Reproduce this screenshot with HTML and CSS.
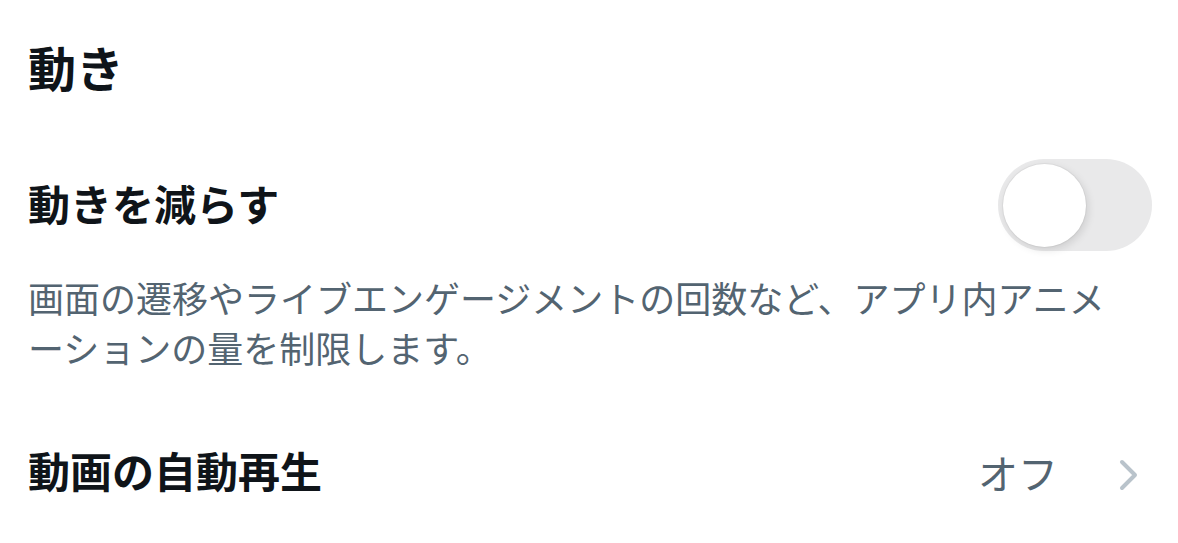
FILE: index.html
```html
<!DOCTYPE html>
<html lang="ja">
<head>
    <meta charset="UTF-8">
    <meta name="viewport" content="width=device-width, initial-scale=1.0">
    <title>動き</title>
    <link rel="stylesheet" href="styles.css">
</head>
<body>
    <div class="settings">
        <h1 class="section-title">動き</h1>

        <div class="setting-row toggle-row">
            <span class="setting-label">動きを減らす</span>
            <label class="switch">
                <input type="checkbox">
                <span class="track"><span class="knob"></span></span>
            </label>
        </div>
        <p class="setting-desc">画面の遷移やライブエンゲージメントの回数など、アプリ内アニメーションの量を制限します。</p>

        <div class="setting-row link-row">
            <span class="setting-label">動画の自動再生</span>
            <span class="setting-value">
                オフ
                <svg class="chevron" width="22" height="34" viewBox="0 0 22 34">
                    <polyline points="4,4 17,17 4,30" fill="none" stroke="#b9c3cb" stroke-width="4" stroke-linecap="round" stroke-linejoin="round"/>
                </svg>
            </span>
        </div>
    </div>
</body>
</html>
```

FILE: styles.css
```css
body {
    margin: 0;
    background-color: #fff;
    font-family: "Noto Sans CJK JP", "Noto Sans", sans-serif;
    color: #0f1419;
}
.settings {
    padding: 0 26px 0 28px;
}
.section-title {
    margin: 0;
    height: 132px;
    padding-bottom: 6px;
    display: flex;
    align-items: center;
    font-size: 48px;
    font-weight: 700;
    line-height: 1;
}
.setting-row {
    display: flex;
    align-items: center;
    justify-content: space-between;
}
.toggle-row {
    height: 134px;
}
.link-row {
    height: 100px;
}
.setting-label {
    font-size: 42px;
    font-weight: 600;
    line-height: 1;
    margin-top: -4px;
}
.setting-desc {
    margin: 0 0 50px;
    width: 1100px;
    font-size: 36px;
    line-height: 50px;
    color: #536471;
    line-break: loose;
}
.setting-value {
    display: flex;
    align-items: center;
    gap: 60px;
    padding-right: 12px;
    font-size: 40px;
    line-height: 1;
    color: #536471;
}
.chevron {
    margin-top: 6px;
}

/* off-state switch */
.switch input {
    display: none;
}
.track {
    display: flex;
    align-items: center;
    width: 154px;
    height: 92px;
    padding: 0 5px;
    box-sizing: border-box;
    border-radius: 46px;
    background-color: #e9e9ea;
}
.knob {
    width: 83px;
    height: 83px;
    border-radius: 50%;
    background-color: #fff;
    box-shadow: 0 0 0 1px rgba(0,0,0,0.04), 2px 3px 8px rgba(0,0,0,0.12);
}
```
